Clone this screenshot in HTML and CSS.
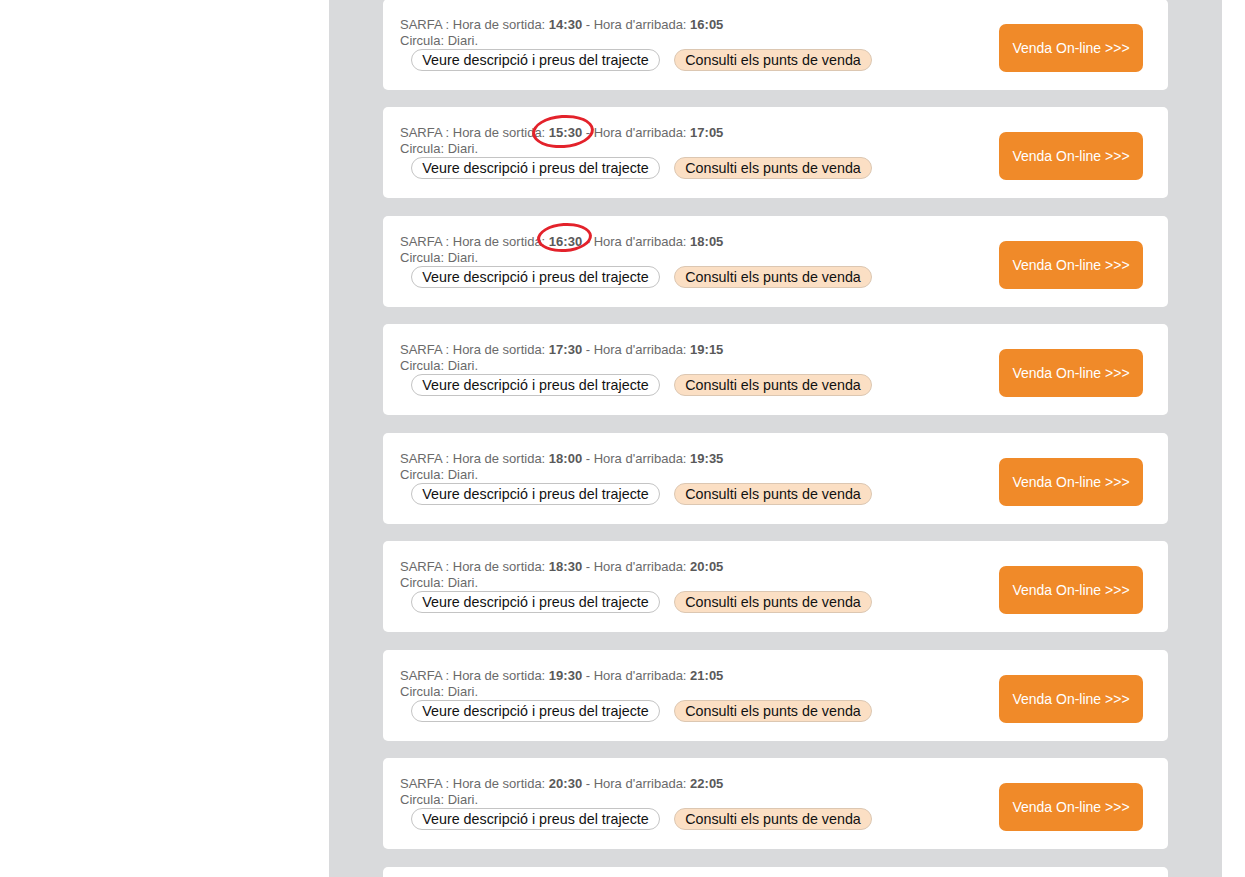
FILE: index.html
```html
<!DOCTYPE html>
<html lang="ca">
<head>
<meta charset="utf-8">
<link rel="stylesheet" href="styles.css">
</head>
<body>
<div class="panel">
  <div class="trip-list">

    <div class="trip">
      <div class="trip-info">
        <div class="line">SARFA : Hora de sortida: <b>14:30</b> - Hora d'arribada: <b>16:05</b></div>
        <div class="line">Circula: Diari.</div>
        <div class="trip-buttons">
          <button class="btn-desc">Veure descripció i preus del trajecte</button>
          <button class="btn-punts">Consulti els punts de venda</button>
        </div>
      </div>
      <button class="btn-venda">Venda On-line &gt;&gt;&gt;</button>
    </div>

    <div class="trip">
      <div class="trip-info">
        <div class="line">SARFA : Hora de sortida: <b>15:30</b> - Hora d'arribada: <b>17:05</b></div>
        <div class="line">Circula: Diari.</div>
        <div class="trip-buttons">
          <button class="btn-desc">Veure descripció i preus del trajecte</button>
          <button class="btn-punts">Consulti els punts de venda</button>
        </div>
      </div>
      <button class="btn-venda">Venda On-line &gt;&gt;&gt;</button>
      <span class="mark mark-big"></span>
    </div>

    <div class="trip">
      <div class="trip-info">
        <div class="line">SARFA : Hora de sortida: <b>16:30</b> - Hora d'arribada: <b>18:05</b></div>
        <div class="line">Circula: Diari.</div>
        <div class="trip-buttons">
          <button class="btn-desc">Veure descripció i preus del trajecte</button>
          <button class="btn-punts">Consulti els punts de venda</button>
        </div>
      </div>
      <button class="btn-venda">Venda On-line &gt;&gt;&gt;</button>
      <span class="mark mark-small"></span>
    </div>

    <div class="trip">
      <div class="trip-info">
        <div class="line">SARFA : Hora de sortida: <b>17:30</b> - Hora d'arribada: <b>19:15</b></div>
        <div class="line">Circula: Diari.</div>
        <div class="trip-buttons">
          <button class="btn-desc">Veure descripció i preus del trajecte</button>
          <button class="btn-punts">Consulti els punts de venda</button>
        </div>
      </div>
      <button class="btn-venda">Venda On-line &gt;&gt;&gt;</button>
    </div>

    <div class="trip">
      <div class="trip-info">
        <div class="line">SARFA : Hora de sortida: <b>18:00</b> - Hora d'arribada: <b>19:35</b></div>
        <div class="line">Circula: Diari.</div>
        <div class="trip-buttons">
          <button class="btn-desc">Veure descripció i preus del trajecte</button>
          <button class="btn-punts">Consulti els punts de venda</button>
        </div>
      </div>
      <button class="btn-venda">Venda On-line &gt;&gt;&gt;</button>
    </div>

    <div class="trip">
      <div class="trip-info">
        <div class="line">SARFA : Hora de sortida: <b>18:30</b> - Hora d'arribada: <b>20:05</b></div>
        <div class="line">Circula: Diari.</div>
        <div class="trip-buttons">
          <button class="btn-desc">Veure descripció i preus del trajecte</button>
          <button class="btn-punts">Consulti els punts de venda</button>
        </div>
      </div>
      <button class="btn-venda">Venda On-line &gt;&gt;&gt;</button>
    </div>

    <div class="trip">
      <div class="trip-info">
        <div class="line">SARFA : Hora de sortida: <b>19:30</b> - Hora d'arribada: <b>21:05</b></div>
        <div class="line">Circula: Diari.</div>
        <div class="trip-buttons">
          <button class="btn-desc">Veure descripció i preus del trajecte</button>
          <button class="btn-punts">Consulti els punts de venda</button>
        </div>
      </div>
      <button class="btn-venda">Venda On-line &gt;&gt;&gt;</button>
    </div>

    <div class="trip">
      <div class="trip-info">
        <div class="line">SARFA : Hora de sortida: <b>20:30</b> - Hora d'arribada: <b>22:05</b></div>
        <div class="line">Circula: Diari.</div>
        <div class="trip-buttons">
          <button class="btn-desc">Veure descripció i preus del trajecte</button>
          <button class="btn-punts">Consulti els punts de venda</button>
        </div>
      </div>
      <button class="btn-venda">Venda On-line &gt;&gt;&gt;</button>
    </div>

    <div class="trip"></div>

  </div>
</div>
</body>
</html>
```

FILE: styles.css
```css
* {
  box-sizing: border-box;
}
html, body {
  height: 100%;
}
body {
  margin: 0;
  background: #ffffff;
  font-family: "Liberation Sans", Arial, sans-serif;
  overflow: hidden;
}
.panel {
  margin-left: 329px;
  width: 893px;
  min-height: 100%;
  background: #d9dadc;
  padding-left: 54px;
}
.trip-list {
  display: flex;
  flex-direction: column;
  gap: 17.57px;
  margin-top: -1.5px;
}
.trip {
  position: relative;
  width: 785px;
  height: 91px;
  flex-shrink: 0;
  background: #ffffff;
  border-radius: 5px;
  display: flex;
  justify-content: space-between;
  align-items: flex-start;
  padding: 18px 25px 0 17px;
}
.trip-info {
  color: #6a6a6a;
  font-size: 13px;
}
.line {
  line-height: 16px;
  height: 16px;
}
.line b {
  color: #595959;
}
.trip-buttons {
  display: flex;
  gap: 14px;
  padding-left: 11px;
}
.trip-buttons button {
  height: 22px;
  border-radius: 11px;
  font-family: "Liberation Sans", Arial, sans-serif;
  font-size: 14.3px;
  color: #111111;
  padding: 0;
  cursor: pointer;
}
.btn-desc {
  width: 249px;
  background: #ffffff;
  border: 1px solid #c4c4c4;
}
.btn-punts {
  width: 198px;
  background: #fbdfc4;
  border: 1px solid #dcc7b2;
}
.btn-venda {
  margin-top: 7px;
  width: 144px;
  height: 48px;
  border: none;
  border-radius: 7px;
  background: #f08a29;
  color: #ffffff;
  font-family: "Liberation Sans", Arial, sans-serif;
  font-size: 14px;
  cursor: pointer;
}
.mark {
  position: absolute;
  border: 3px solid #e3222b;
  border-radius: 50%;
  transform: rotate(-4deg);
}
.mark-big {
  left: 149px;
  top: 8px;
  width: 62px;
  height: 33px;
}
.mark-small {
  left: 154px;
  top: 7px;
  width: 55px;
  height: 29px;
}
```
